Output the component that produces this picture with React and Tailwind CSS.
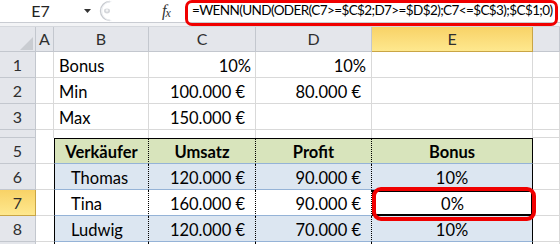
import React from "react";

const G = "grid grid-cols-[36px_18px_95px_107px_116px_161px_27px]";
const HEAD = "flex items-center justify-center bg-[#e4e6eb] border-r border-b border-[#c3c7ce] text-[16px] text-[#2f2f2f] overflow-hidden";
const HEAD_ACT = "flex items-center justify-center bg-gradient-to-b from-[#f8d266] to-[#fee88e] border-r border-b border-[#c9a545] text-[16px] text-[#2f2f2f] overflow-hidden";
const GC = "flex items-end pb-[3px] leading-none border-r border-b border-[#d9d9d9] overflow-hidden whitespace-nowrap";
const A_T = "border-b border-[#d9d9d9]";

function RowH({ n, act }) {
  return <div className={act ? HEAD_ACT : HEAD}>{n}</div>;
}

export default function App() {
  return (
    <div className="relative w-[560px] h-[244px] overflow-hidden bg-white font-[family-name:'Lato',sans-serif] text-[16.5px] text-black">
      {/* formula bar */}
      <div className="h-[27px] bg-[#f3f4f6] border-b border-[#d5d8dd]">
        <div className="flex h-[23px] bg-white border-b border-[#c9ccd2]">
          <div className="w-[80px] shrink-0 flex items-center justify-center text-[16px] text-[#222] pl-[1px]">E7</div>
          <div className="w-[16px] shrink-0 flex items-center justify-start pl-[4px]">
            <svg width="7" height="4" viewBox="0 0 7 4"><path d="M0 0H7L3.5 4Z" fill="#333" /></svg>
          </div>
          <div className="w-[60px] shrink-0 relative">
            <svg width="60" height="23" viewBox="0 0 60 23">
              <path d="M14 1.5A9.5 9.5 0 0 0 14 20.5" fill="none" stroke="#c8cbd0" strokeWidth="1.4" />
              <path d="M14 1.5A9.5 9.5 0 0 0 14 20.5" fill="none" stroke="#eceef1" strokeWidth="1" transform="translate(1.3 0)" />
              <ellipse cx="11" cy="11" rx="3" ry="2.4" fill="#d5d7db" />
              <circle cx="11" cy="10.5" r="1.2" fill="#f4f5f6" />
            </svg>
          </div>
          <div className="w-[31px] shrink-0 flex items-center justify-start pl-[6px] font-[family-name:'Liberation_Serif',serif] italic text-[16px] text-[#333] leading-none">
            f<span className="text-[12px] -ml-[1px] mt-[4px]">x</span>
          </div>
          <div className="flex-1 min-w-0 flex items-center pl-[5px] text-[13.5px] tracking-[-0.6px] leading-none whitespace-nowrap text-black">
            =WENN(UND(ODER(C7&gt;=$C$2;D7&gt;=$D$2);C7&lt;=$C$3);$C$1;0)
          </div>
        </div>
      </div>

      {/* column headers */}
      <div className={G + " h-[25px]"}>
        <div className={HEAD + " relative"}>
          <svg className="absolute left-[20px] top-[10px]" width="13" height="13" viewBox="0 0 13 13">
            <path d="M13 0V13H0Z" fill="#c9ccd1" />
          </svg>
        </div>
        <div className={HEAD}>A</div>
        <div className={HEAD}>B</div>
        <div className={HEAD}>C</div>
        <div className={HEAD}>D</div>
        <div className={HEAD_ACT}>E</div>
        <div className={HEAD}></div>
      </div>

      {/* row 1 */}
      <div className={G + " h-[26px]"}>
        <RowH n="1" />
        <div className={GC}></div>
        <div className={GC + " pl-[5px]"}>Bonus</div>
        <div className={GC + " justify-end pr-[4px]"}>10%</div>
        <div className={GC + " justify-end pr-[5px]"}>10%</div>
        <div className={GC}></div>
        <div className={GC}></div>
      </div>
      {/* row 2 */}
      <div className={G + " h-[26px]"}>
        <RowH n="2" />
        <div className={GC}></div>
        <div className={GC + " pl-[5px]"}>Min</div>
        <div className={GC + " justify-end pr-[10px]"}>100.000 €</div>
        <div className={GC + " justify-end pr-[10px]"}>80.000 €</div>
        <div className={GC}></div>
        <div className={GC}></div>
      </div>
      {/* row 3 */}
      <div className={G + " h-[26px]"}>
        <RowH n="3" />
        <div className={GC}></div>
        <div className={GC + " pl-[5px]"}>Max</div>
        <div className={GC + " justify-end pr-[10px]"}>150.000 €</div>
        <div className={GC}></div>
        <div className={GC}></div>
        <div className={GC}></div>
      </div>
      {/* row 4 (narrow) */}
      <div className={G + " h-[8px]"}>
        <RowH n="" />
        <div className="border-r border-[#d9d9d9]"></div>
        <div className="border-r border-[#d9d9d9]"></div>
        <div className="border-r border-[#d9d9d9]"></div>
        <div className="border-r border-[#d9d9d9]"></div>
        <div className="border-r border-[#d9d9d9]"></div>
        <div className="border-r border-b border-[#d9d9d9]"></div>
      </div>
      {/* row 5 table header */}
      <div className={G + " h-[26px]"}>
        <RowH n="5" />
        <div className={A_T}></div>
        <div className="flex items-end justify-center pb-[3px] leading-none font-bold bg-[#d8e4bc] border-l border-l-black border-t border-t-black border-b border-b-[#95b3d7] border-r border-r-black [border-right-style:dotted]">Verkäufer</div>
        <div className="flex items-end justify-center pb-[3px] leading-none font-bold bg-[#d8e4bc] border-t border-t-black border-b border-b-[#95b3d7] border-r border-r-black [border-right-style:dotted]">Umsatz</div>
        <div className="flex items-end justify-center pb-[3px] leading-none font-bold bg-[#d8e4bc] border-t border-t-black border-b border-b-[#95b3d7] border-r border-r-black [border-right-style:dotted]">Profit</div>
        <div className="flex items-end justify-center pb-[3px] leading-none font-bold bg-[#d8e4bc] border-t border-t-black border-b border-b-[#95b3d7] border-r border-r-black">Bonus</div>
        <div className={GC}></div>
      </div>
      {/* rows 6-8 */}
      {[
        ["6", "Thomas", "120.000 €", "90.000 €", "10%", true],
        ["7", "Tina", "160.000 €", "90.000 €", "0%", false],
        ["8", "Ludwig", "120.000 €", "70.000 €", "10%", true],
      ].map(([n, name, u, p, b, band]) => (
        <div key={n} className={G + " h-[26px]"}>
          <RowH n={n} act={n === "7"} />
          <div className={A_T}></div>
          <div className={"flex items-end pb-[3px] pl-[16px] leading-none whitespace-nowrap border-l border-l-black border-b border-b-[#95b3d7] border-r border-r-black [border-right-style:dotted] " + (band ? "bg-[#dce6f1]" : "bg-white")}>{name}</div>
          <div className={"flex items-end justify-end pb-[3px] pr-[10px] leading-none whitespace-nowrap border-b border-b-[#95b3d7] border-r border-r-black [border-right-style:dotted] " + (band ? "bg-[#dce6f1]" : "bg-white")}>{u}</div>
          <div className={"flex items-end justify-end pb-[3px] pr-[10px] leading-none whitespace-nowrap border-b border-b-[#95b3d7] border-r border-r-black [border-right-style:dotted] " + (band ? "bg-[#dce6f1]" : "bg-white")}>{p}</div>
          {n === "7" ? (
            <div className="flex items-end justify-center pb-[2px] leading-none bg-white border-2 border-black">{b}</div>
          ) : (
            <div className={"flex items-end justify-center pb-[3px] leading-none border-b border-b-[#95b3d7] border-r border-r-black " + (band ? "bg-[#dce6f1]" : "bg-white")}>{b}</div>
          )}
          <div className={GC}></div>
        </div>
      ))}
      {/* row 9 partial */}
      <div className={G + " h-[4px]"}>
        <div className="bg-[#e4e6eb] border-r border-[#c3c7ce]"></div>
        <div></div>
        <div className="border-l border-l-black border-r border-r-black [border-right-style:dotted]"></div>
        <div className="border-r border-r-black [border-right-style:dotted]"></div>
        <div className="border-r border-r-black [border-right-style:dotted]"></div>
        <div className="border-r border-r-black"></div>
        <div className="border-r border-[#d9d9d9]"></div>
      </div>

      {/* annotation overlays */}
      <div className="absolute left-[185px] top-0 w-[373px] h-[26px] border-[3px] border-[#f00000] rounded-[7px]"></div>
      <div className="absolute left-[372px] top-[187px] w-[164px] h-[34px] border-4 border-[#f00000] rounded-[9px]"></div>
    </div>
  );
}
